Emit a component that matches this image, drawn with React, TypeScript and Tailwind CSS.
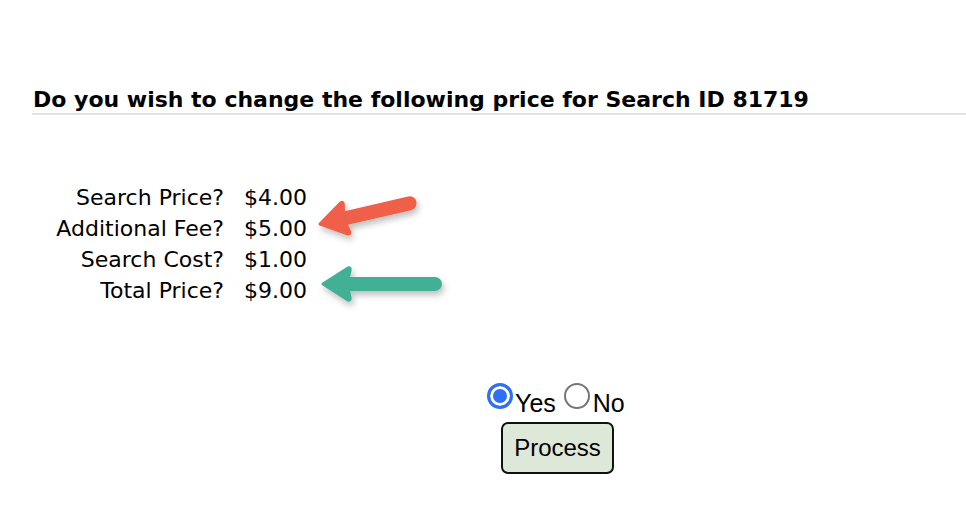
import React from 'react';

const prices = [
  { label: 'Search Price?', value: '$4.00' },
  { label: 'Additional Fee?', value: '$5.00' },
  { label: 'Search Cost?', value: '$1.00' },
  { label: 'Total Price?', value: '$9.00' },
];

const radioClass =
  'm-0 shrink-0 appearance-none w-[26px] h-[26px] rounded-full border-2 border-[#767676] bg-white checked:border-[3px] checked:border-[#2f6ef6] checked:bg-[#2f6ef6] checked:shadow-[inset_0_0_0_3px_white]';

// left-pointing callout arrow, drawn with its tip at (0,0)
function Arrow({ length, color }: { length: number; color: string }) {
  return (
    <g>
      <line x1={18} y1={0} x2={length - 8} y2={0} stroke={color} strokeWidth={14} strokeLinecap="round" />
      <path d="M0 0 L25 -16 Q28 -17 27 -13 L24 0 L27 13 Q28 17 25 16 Z" fill={color} stroke={color} strokeWidth={3} strokeLinejoin="round" />
    </g>
  );
}

export default function App() {
  const [answer, setAnswer] = React.useState('yes');

  return (
    <div className="relative w-[966px] h-[512px] bg-white overflow-hidden text-black">
      <div className="pt-[87px] pl-8">
        <h2 className="font-['DejaVu_Sans',sans-serif] font-bold text-[22px] leading-[25px] pl-px pb-px border-b-2 border-[#e2e2e2]">
          Do you wish to change the following price for Search ID 81719
        </h2>
      </div>

      <div className="mt-[67px] ml-8 grid grid-cols-[192px_auto] gap-x-5 font-['DejaVu_Sans',sans-serif] text-[22px] leading-[31px]">
        {prices.map((p) => (
          <React.Fragment key={p.label}>
            <div className="text-right">{p.label}</div>
            <div>{p.value}</div>
          </React.Fragment>
        ))}
      </div>

      <div className="mt-[77px] ml-[487px] font-['Liberation_Sans',sans-serif]">
        <div className="flex items-start h-[26px] text-[25px] leading-[26px]">
          <input
            type="radio"
            name="answer"
            checked={answer === 'yes'}
            onChange={() => setAnswer('yes')}
            className={radioClass}
          />
          <span className="ml-[2px] mt-[7px]">Yes</span>
          <input
            type="radio"
            name="answer"
            checked={answer === 'no'}
            onChange={() => setAnswer('no')}
            className={'ml-[8px] ' + radioClass}
          />
          <span className="ml-[3px] mt-[7px]">No</span>
        </div>
        <button className="mt-[13px] ml-[14px] w-[113px] h-[52px] rounded-[7px] border-2 border-[#111] bg-[#dde8d9] text-[24px]">
          Process
        </button>
      </div>

      <svg className="absolute left-0 top-0 pointer-events-none" width={966} height={512}>
        <defs>
          <filter id="shadow" x="-20%" y="-50%" width="140%" height="220%">
            <feDropShadow dx={2} dy={4} stdDeviation={3} floodColor="#000" floodOpacity={0.25} />
          </filter>
        </defs>
        <g filter="url(#shadow)">
          <g transform="translate(320 224) rotate(-13)">
            <Arrow length={100} color="#ef5f48" />
          </g>
          <g transform="translate(323 284)">
            <Arrow length={120} color="#42b094" />
          </g>
        </g>
      </svg>
    </div>
  );
}
